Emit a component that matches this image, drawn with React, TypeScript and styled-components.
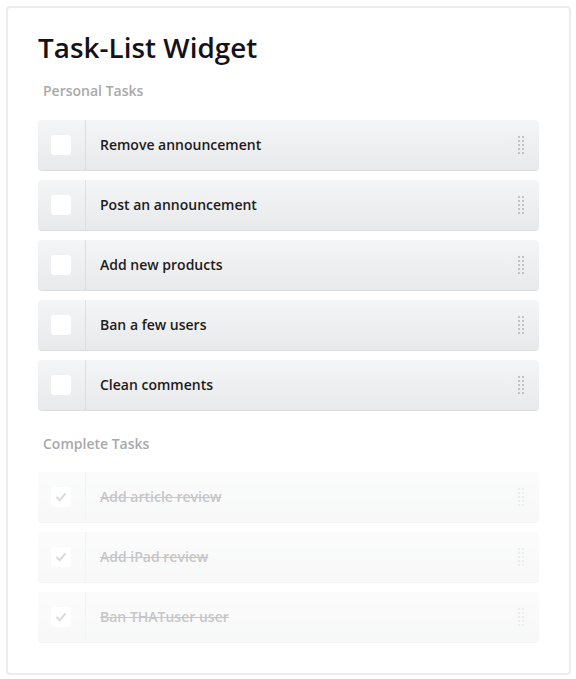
import React from "react";
import styled, { createGlobalStyle } from "styled-components";

const Global = createGlobalStyle`
  html, body { margin: 0; padding: 0; background: #ffffff; }
  body { font-family: "Open Sans", "Liberation Sans", sans-serif; }
  * { box-sizing: border-box; }
`;

const Page = styled.div`
  padding: 6px 5px 5px 6px;
`;

const Card = styled.section`
  width: 565px;
  border: 2px solid #ececec;
  border-radius: 4px;
  background: #ffffff;
  padding: 22px 30px 31px 30px;
`;

const Title = styled.h1`
  margin: 0;
  font-size: 27.8px;
  line-height: 34px;
  font-weight: 600;
  color: #141118;
  letter-spacing: 0.05px;
`;

const SectionLabel = styled.h2<{ $top: number }>`
  margin: ${(p) => p.$top}px 0 0 5px;
  font-size: 14px;
  line-height: 20px;
  font-weight: 600;
  color: #a9a9a9;
`;

const List = styled.ul<{ $top: number }>`
  list-style: none;
  margin: ${(p) => p.$top}px 0 0 0;
  padding: 0;
  display: flex;
  flex-direction: column;
  gap: 10px;
`;

const Row = styled.li<{ $done?: boolean }>`
  display: flex;
  align-items: stretch;
  height: 50px;
  border-radius: 4px;
  background: linear-gradient(#f4f5f6, #e8e9eb);
  box-shadow: 0 1px 0 #dcdde0;
  opacity: ${(p) => (p.$done ? 0.3 : 1)};
`;

const CheckCell = styled.div`
  width: 48px;
  flex: none;
  display: flex;
  align-items: center;
  justify-content: center;
  border-right: 1px solid #dddee1;
  padding-right: 1px;
`;

const Box = styled.span`
  width: 20px;
  height: 20px;
  border-radius: 3px;
  background: #ffffff;
  display: flex;
  align-items: center;
  justify-content: center;
`;

const Label = styled.span<{ $done?: boolean }>`
  flex: 1;
  display: flex;
  align-items: center;
  padding: 0 0 2px 14px;
  font-size: 14px;
  font-weight: 600;
  color: ${(p) => (p.$done ? "#444" : "#1d1b20")};
  text-decoration: ${(p) => (p.$done ? "line-through" : "none")};
  text-decoration-thickness: 1px;
`;

const Handle = styled.span`
  width: 6px;
  margin-right: 15px;
  align-self: center;
  display: grid;
  grid-template-columns: 2px 2px;
  column-gap: 2px;
  row-gap: 2px;
`;

const Dot = styled.i`
  width: 2px;
  height: 2px;
  background: #c2c3c6;
`;

const Check = () => (
  <svg width="12" height="12" viewBox="0 0 12 12">
    <path d="M2 6.5 L4.8 9.2 L10 3" fill="none" stroke="#888" strokeWidth="2" strokeLinecap="round" strokeLinejoin="round" />
  </svg>
);

const Grip = () => (
  <Handle>
    {Array.from({ length: 10 }).map((_, i) => (
      <Dot key={i} />
    ))}
  </Handle>
);

const personal = ["Remove announcement", "Post an announcement", "Add new products", "Ban a few users", "Clean comments"];
const complete = ["Add article review", "Add iPad review", "Ban THATuser user"];

export default function App() {
  return (
    <>
      <Global />
      <Page>
        <Card>
          <Title>Task-List Widget</Title>
          <SectionLabel $top={17}>Personal Tasks</SectionLabel>
          <List $top={19}>
            {personal.map((t) => (
              <Row key={t}>
                <CheckCell>
                  <Box />
                </CheckCell>
                <Label>{t}</Label>
                <Grip />
              </Row>
            ))}
          </List>
          <SectionLabel $top={24}>Complete Tasks</SectionLabel>
          <List $top={18}>
            {complete.map((t) => (
              <Row key={t} $done>
                <CheckCell>
                  <Box>
                    <Check />
                  </Box>
                </CheckCell>
                <Label $done>{t}</Label>
                <Grip />
              </Row>
            ))}
          </List>
        </Card>
      </Page>
    </>
  );
}
